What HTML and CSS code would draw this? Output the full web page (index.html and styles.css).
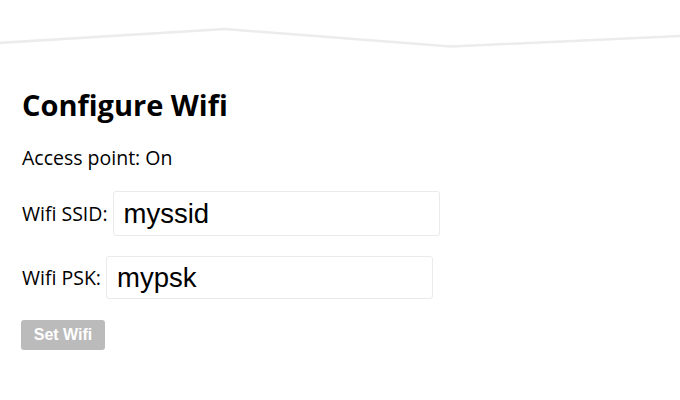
FILE: index.html
```html
<!DOCTYPE html>
<html>
<head>
<meta charset="utf-8">
<link rel="stylesheet" href="styles.css">
</head>
<body>
<svg class="wave" width="680" height="60" viewBox="0 0 680 60">
  <polyline points="-2,43 225,29 451,46.5 682,36" fill="none" stroke="#ececec" stroke-width="2.5"/>
</svg>
<main class="content">
  <h1 class="title">Configure Wifi</h1>
  <p class="status">Access point: On</p>
  <form class="form">
    <div class="row"><label class="label" for="ssid">Wifi SSID:</label><input class="field" id="ssid" type="text" value="myssid"></div>
    <div class="row row-last"><label class="label" for="psk">Wifi PSK:</label><input class="field field-short" id="psk" type="text" value="mypsk"></div>
    <button class="btn" type="button" disabled>Set Wifi</button>
  </form>
</main>
</body>
</html>
```
FILE: styles.css
```css
html, body { margin: 0; padding: 0; background: #fff; }
body { font-family: "Open Sans", "Noto Sans", sans-serif; color: #000; }
.wave { display: block; }
.content { padding: 0 22px; }
.title { margin: 25px 0 0; font-size: 29px; font-weight: 700; line-height: 40px; }
.status { margin: 20px 0 0; font-size: 19.5px; line-height: 26px; }
.form { margin-top: 20px; display: flex; flex-direction: column; align-items: flex-start; }
.row { display: flex; align-items: center; gap: 5px; margin-bottom: 20px; }
.row-last { margin-bottom: 21px; }
.label { font-size: 19.5px; }
.field { box-sizing: border-box; width: 327px; height: 45px; border: 1px solid #eaeaea; border-radius: 3px; padding: 0 10px; font-family: "Liberation Sans", Arial, sans-serif; font-size: 27.5px; color: #000; outline: none; }
.field-short { height: 43px; }
.btn { box-sizing: border-box; width: 84px; height: 30px; margin-left: -1px; border: 0; border-radius: 3px; background: #bbb; color: #fff; font-family: "Liberation Sans", Arial, sans-serif; font-weight: 700; font-size: 16px; padding: 0; }
```
